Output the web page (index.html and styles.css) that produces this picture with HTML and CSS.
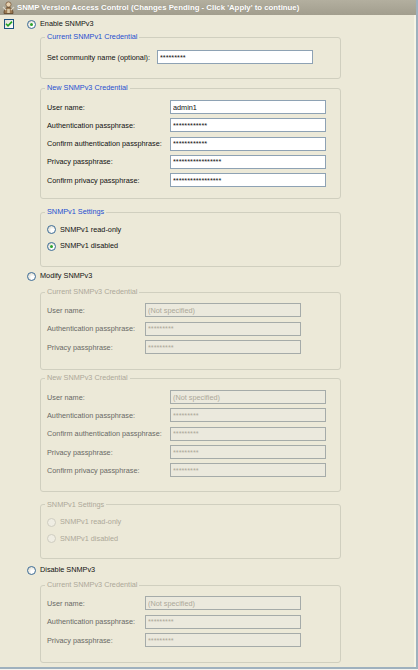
FILE: index.html
```html
<!DOCTYPE html>
<html lang="en">
<head>
    <meta charset="UTF-8">
    <title>SNMP Version Access Control</title>
    <link rel="stylesheet" href="styles.css">
</head>
<body>
    <div class="window">
        <div class="titlebar">
            <svg class="title-icon" width="13" height="13" viewBox="0 0 13 13">
                <circle cx="6.5" cy="3.5" r="2.6" fill="#e8d2b0" stroke="#7a5a3a" stroke-width="0.8"/>
                <path d="M2 12.5 C2 8 4 6.5 6.5 6.5 C9 6.5 11 8 11 12.5 Z" fill="#9c7a52" stroke="#5e4428" stroke-width="0.8"/>
                <path d="M1 6 L4 9 M12 6 L9 9" stroke="#d9d4c4" stroke-width="1.2"/>
                <rect x="5.2" y="8" width="2.6" height="4" fill="#d9c9a8"/>
            </svg>
            <span>SNMP Version Access Control (Changes Pending - Click 'Apply' to continue)</span>
        </div>

        <div class="panel">
            <div class="check-col">
                <span class="checkbox">
                    <svg width="8" height="8" viewBox="0 0 8 8">
                        <path d="M1 3.8 L3 5.9 L7 1.6" fill="none" stroke="#21a121" stroke-width="1.6"/>
                    </svg>
                </span>
            </div>

            <div class="content">
                <!-- enable -->
                <div class="option"><span class="radio checked"></span>Enable SNMPv3</div>

                <fieldset class="group g1">
                    <legend>Current SNMPv1 Credential</legend>
                    <div class="fields w-a">
                        <label>Set community name (optional):</label>
                        <input type="text" value="*********">
                    </div>
                </fieldset>

                <fieldset class="group g2">
                    <legend>New SNMPv3 Credential</legend>
                    <div class="fields w-b">
                        <label>User name:</label>
                        <input type="text" value="admin1">
                        <label>Authentication passphrase:</label>
                        <input type="text" value="************">
                        <label>Confirm authentication passphrase:</label>
                        <input type="text" value="************">
                        <label>Privacy passphrase:</label>
                        <input type="text" value="*****************">
                        <label>Confirm privacy passphrase:</label>
                        <input type="text" value="*****************">
                    </div>
                </fieldset>

                <fieldset class="group g3">
                    <legend>SNMPv1 Settings</legend>
                    <div class="choices">
                        <div class="option"><span class="radio"></span>SNMPv1 read-only</div>
                        <div class="option"><span class="radio checked"></span>SNMPv1 disabled</div>
                    </div>
                </fieldset>

                <!-- modify -->
                <div class="option opt-modify"><span class="radio"></span>Modify SNMPv3</div>

                <fieldset class="group off g4">
                    <legend>Current SNMPv3 Credential</legend>
                    <div class="fields w-c">
                        <label>User name:</label>
                        <input type="text" value="(Not specified)" disabled>
                        <label>Authentication passphrase:</label>
                        <input type="text" value="*********" disabled>
                        <label>Privacy passphrase:</label>
                        <input type="text" value="*********" disabled>
                    </div>
                </fieldset>

                <fieldset class="group off g5">
                    <legend>New SNMPv3 Credential</legend>
                    <div class="fields w-b">
                        <label>User name:</label>
                        <input type="text" value="(Not specified)" disabled>
                        <label>Authentication passphrase:</label>
                        <input type="text" value="*********" disabled>
                        <label>Confirm authentication passphrase:</label>
                        <input type="text" value="*********" disabled>
                        <label>Privacy passphrase:</label>
                        <input type="text" value="*********" disabled>
                        <label>Confirm privacy passphrase:</label>
                        <input type="text" value="*********" disabled>
                    </div>
                </fieldset>

                <fieldset class="group off g6">
                    <legend>SNMPv1 Settings</legend>
                    <div class="choices">
                        <div class="option"><span class="radio"></span>SNMPv1 read-only</div>
                        <div class="option"><span class="radio"></span>SNMPv1 disabled</div>
                    </div>
                </fieldset>

                <!-- disable -->
                <div class="option opt-disable"><span class="radio"></span>Disable SNMPv3</div>

                <fieldset class="group off g7">
                    <legend>Current SNMPv3 Credential</legend>
                    <div class="fields w-c">
                        <label>User name:</label>
                        <input type="text" value="(Not specified)" disabled>
                        <label>Authentication passphrase:</label>
                        <input type="text" value="*********" disabled>
                        <label>Privacy passphrase:</label>
                        <input type="text" value="*********" disabled>
                    </div>
                </fieldset>
            </div>
        </div>
    </div>
</body>
</html>
```

FILE: styles.css
```css
:root {
    --panel: #ece9d8;
    --frame: #d0cfbf;
    --legend: #1f4fd0;
    --muted: #aca899;
    --edge: #9fb1be;
}

body {
    margin: 0;
    background: #f4f3ee;
    font-family: 'Liberation Sans', Arial, sans-serif;
    font-size: 7.3px;
    color: #111;
}

.window {
    width: 418px;
    height: 669px;
    box-sizing: border-box;
    background: var(--panel);
    border-right: 2px solid var(--edge);
    border-bottom: 2px solid var(--edge);
    box-shadow: inset -2px 0 0 #f7f4e6;
    overflow: hidden;
}

.titlebar {
    height: 15px;
    display: flex;
    align-items: center;
    gap: 2px;
    padding-left: 2px;
    background: linear-gradient(#b3af9f, #a29e8e);
    color: #fff;
    font-weight: bold;
    font-size: 7.8px;
    white-space: nowrap;
    text-shadow: 0 0 1px rgba(0,0,0,0.15);
}

.title-icon {
    flex: none;
}

.panel {
    display: flex;
}

.check-col {
    width: 27px;
    flex: none;
    box-sizing: border-box;
    padding: 4px 0 0 4px;
}

.checkbox {
    display: flex;
    align-items: center;
    justify-content: center;
    width: 10px;
    height: 10px;
    box-sizing: border-box;
    border: 1px solid #1c5180;
    background: linear-gradient(135deg, #dcdbd2, #fff);
}

.content {
    flex: 1;
    padding-top: 4px;
}

.option {
    display: flex;
    align-items: center;
    gap: 4px;
    height: 10px;
    line-height: 10px;
}

.radio {
    position: relative;
    flex: none;
    width: 9px;
    height: 9px;
    box-sizing: border-box;
    border: 1px solid #3d6d99;
    border-radius: 50%;
    background: radial-gradient(circle at 65% 65%, #fff 20%, #e6e4da 65%, #d2d0c4);
}

.radio.checked::after {
    content: '';
    position: absolute;
    left: 2px;
    top: 2px;
    width: 3px;
    height: 3px;
    border-radius: 50%;
    background: #2ea32e;
}

.opt-modify { margin-top: 4px; }
.opt-disable { margin-top: 6px; }

.group {
    width: 301px;
    min-width: 0;
    box-sizing: border-box;
    margin: 0 0 0 13px;
    border: 1px solid var(--frame);
    border-radius: 3px;
    padding: 8px 6px 12px;
}

.group legend {
    padding: 0 2px;
    margin-left: -2px;
    line-height: 8px;
    color: var(--legend);
}

.g1 { margin-top: 4px; padding-top: 9px; padding-bottom: 14px; }
.g2 { margin-top: 5px; padding-top: 8px; padding-bottom: 11px; }
.g3 { margin-top: 9px; padding-top: 8.5px; padding-bottom: 15px; }
.g4 { margin-top: 7px; padding-top: 7px; padding-bottom: 15px; }
.g5 { margin-top: 4px; padding-top: 8px; padding-bottom: 13.5px; }
.g6 { margin-top: 9px; padding-top: 8.5px; padding-bottom: 14.5px; }
.g7 { margin-top: 6px; padding-top: 7px; padding-bottom: 15px; }

.fields {
    display: grid;
    grid-template-columns: var(--lw) 156px;
    row-gap: 4.3px;
    align-items: center;
}

.w-a { --lw: 110px; }
.w-b { --lw: 123px; }
.w-c { --lw: 98px; row-gap: 4.5px; }

.choices {
    display: flex;
    flex-direction: column;
    gap: 6.5px;
}

.choices .option {
    gap: 4px;
}

input {
    height: 14px;
    box-sizing: border-box;
    margin: 0;
    padding: 0 2px;
    border: 1px solid #8ea2b4;
    background: #fff;
    font-family: inherit;
    font-size: 7.3px;
    color: #111;
    outline: none;
}

input:disabled {
    background: #ebe9dd;
    border-color: #a5aba9;
    color: var(--muted);
}

.off legend {
    color: var(--muted);
}

.off label {
    color: #6a6a66;
}

.off .option {
    color: var(--muted);
}

.off .radio {
    border-color: #cfcdc0;
    background: #efede3;
}
```
